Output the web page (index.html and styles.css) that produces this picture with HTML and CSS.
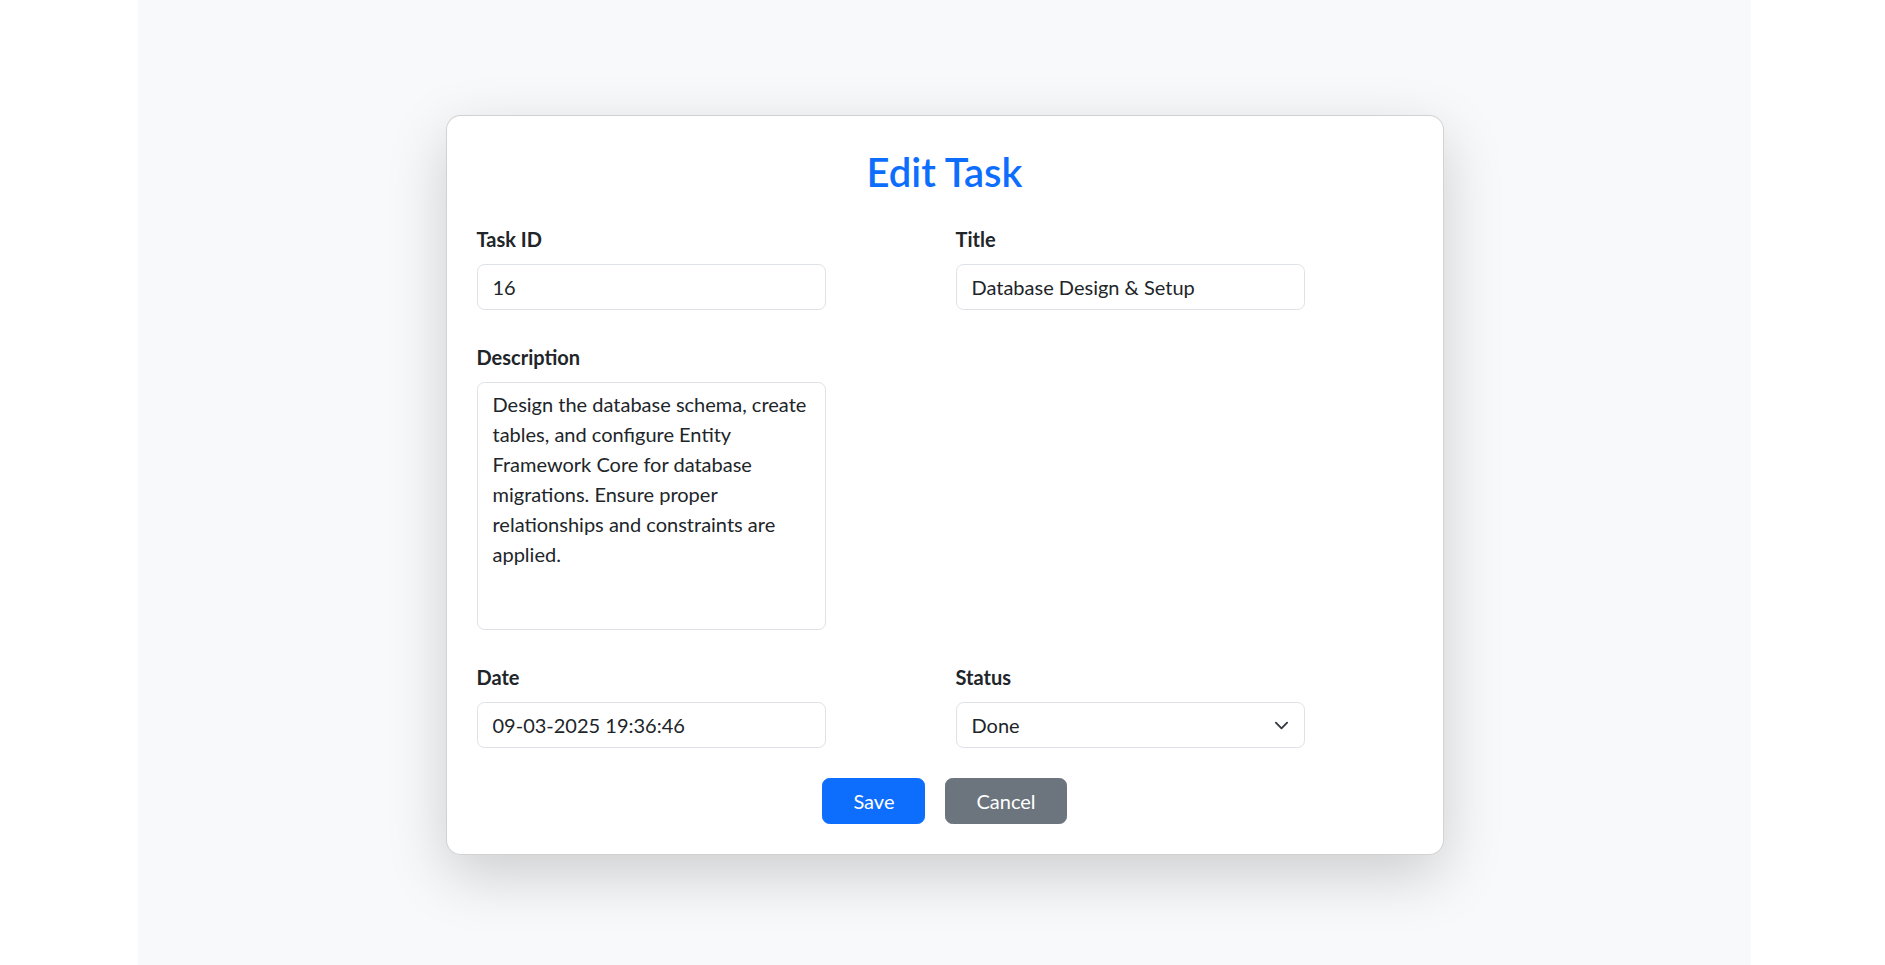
FILE: index.html
```html
<!DOCTYPE html>
<html lang="en">
<head>
<meta charset="utf-8">
<title>Edit Task</title>
<link rel="stylesheet" href="styles.css">
</head>
<body>
<div class="page">
  <div class="card">
    <h2 class="title">Edit Task</h2>
    <form class="form">
      <div class="grid">
        <div class="field">
          <label class="label">Task ID</label>
          <input class="control" type="text" value="16">
        </div>
        <div class="field">
          <label class="label">Title</label>
          <input class="control" type="text" value="Database Design &amp; Setup">
        </div>
        <div class="field">
          <label class="label">Description</label>
          <textarea class="control area">Design the database schema, create tables, and configure Entity Framework Core for database migrations. Ensure proper relationships and constraints are applied.</textarea>
        </div>
        <div class="field"></div>
        <div class="field">
          <label class="label">Date</label>
          <input class="control" type="text" value="09-03-2025 19:36:46">
        </div>
        <div class="field">
          <label class="label">Status</label>
          <div class="control select"><span>Done</span><svg class="chev" width="15" height="15" viewBox="0 0 16 16"><path d="m2 5 6 6 6-6" fill="none" stroke="#343a40" stroke-width="2" stroke-linecap="round" stroke-linejoin="round"/></svg></div>
        </div>
      </div>
      <div class="actions">
        <button type="button" class="btn primary">Save</button>
        <button type="button" class="btn secondary">Cancel</button>
      </div>
    </form>
  </div>
</div>
</body>
</html>
```
FILE: styles.css
```css
* { box-sizing: border-box; }
body {
  margin: 0;
  background: #fff;
  font-family: Lato, "Noto Sans", sans-serif;
  color: #212529;
}
.page {
  width: 1613px;
  min-height: 965px;
  margin-left: 138px;
  background: #f8f9fa;
  padding-top: 115px;
}
.card {
  width: 998px;
  margin: 0 auto;
  background: #fff;
  border: 1px solid rgba(0,0,0,.175);
  border-radius: 15px;
  box-shadow: 0 20px 60px rgba(0,0,0,.175);
  padding: 30px;
}
.title {
  margin: 2px 0 28px;
  text-align: center;
  color: #0d6efd;
  font-size: 40px;
  line-height: 48px;
  font-weight: 600;
}
.grid {
  display: grid;
  grid-template-columns: 479px 459px;
  row-gap: 32px;
}
.label {
  display: block;
  font-size: 20px;
  line-height: 30px;
  font-weight: 700;
  margin-bottom: 10px;
}
.control {
  display: block;
  width: 349px;
  height: 46px;
  padding: 7px 15px;
  font: inherit;
  font-size: 20px;
  line-height: 30px;
  color: #212529;
  background: #fff;
  border: 1px solid #dee2e6;
  border-radius: 7.5px;
  outline: none;
}
.area {
  height: 248px;
  padding-top: 6px;
  resize: none;
  overflow: hidden;
}
.select {
  display: flex;
  align-items: center;
  justify-content: space-between;
}
.chev { display: block; }
.actions {
  display: flex;
  justify-content: center;
  gap: 20px;
  margin-top: 30px;
}
.btn {
  height: 46px;
  padding: 7px 30px;
  font: inherit;
  font-size: 20px;
  line-height: 30px;
  color: #fff;
  border: 1px solid transparent;
  border-radius: 7.5px;
}
.primary { background: #0d6efd; border-color: #0d6efd; }
.secondary { background: #6c757d; border-color: #6c757d; }
```
